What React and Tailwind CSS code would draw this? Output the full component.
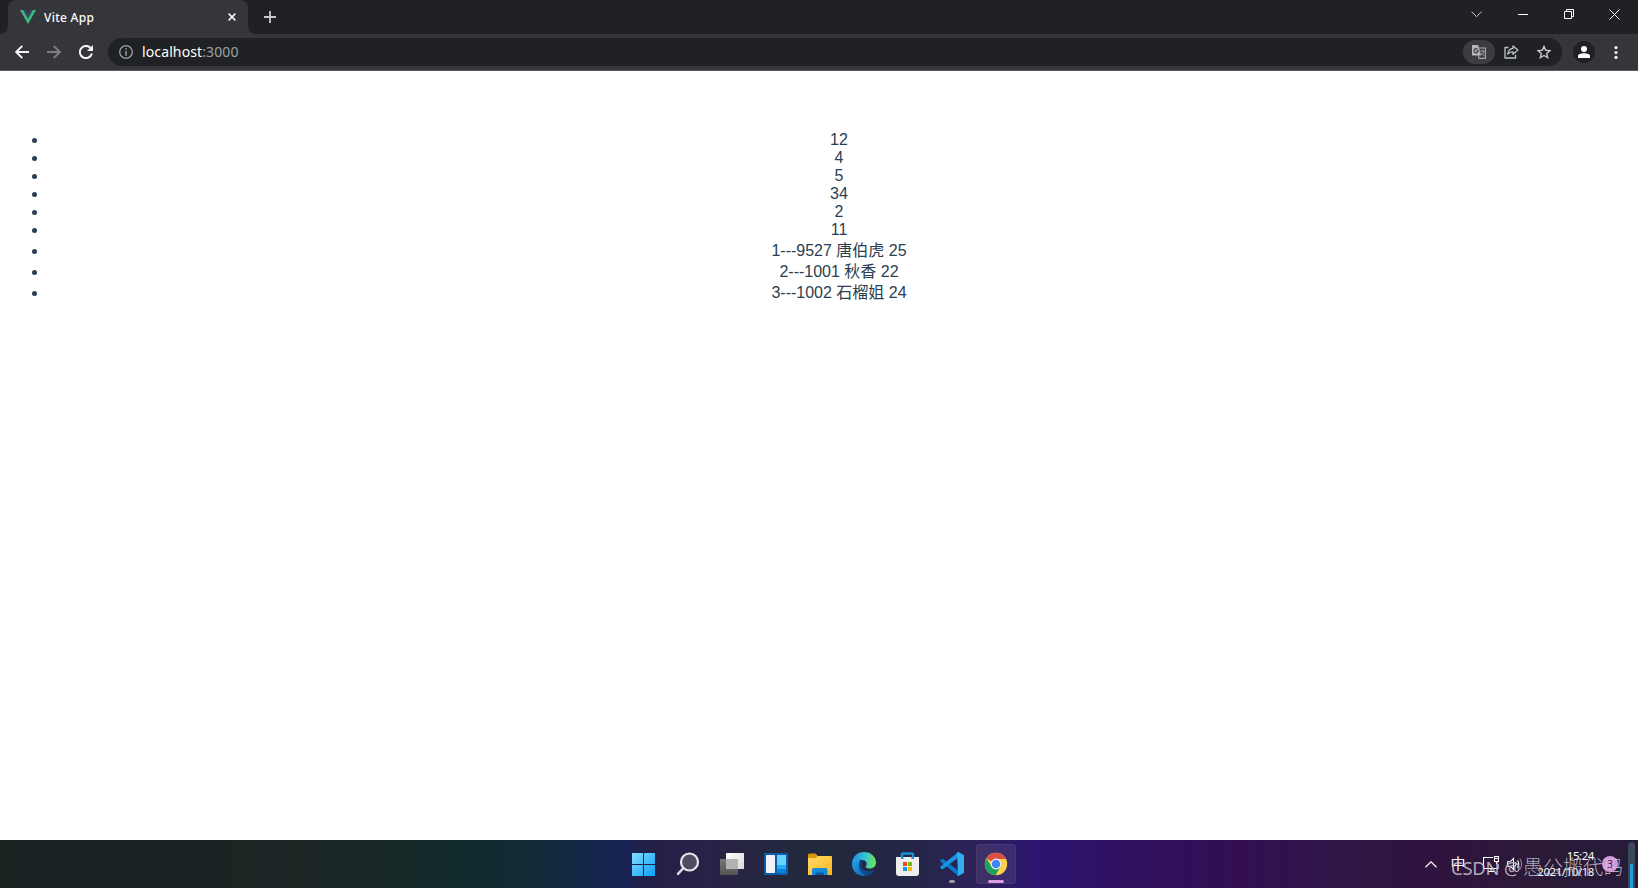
import React from "react";

const numbers = [12, 4, 5, 34, 2, 11];

const people = [
  { id: 9527, name: "唐伯虎", age: 25 },
  { id: 1001, name: "秋香", age: 22 },
  { id: 1002, name: "石榴姐", age: 24 },
];

// --- Browser chrome ---

const VueLogo = () => (
  <svg width="16" height="14" viewBox="0 0 16 14">
    <path d="M0 0h3.2L8 8.4 12.8 0H16L8 14z" fill="#41b883" />
    <path d="M3.2 0h2.9L8 3.3 9.9 0h2.9L8 8.4z" fill="#35495e" />
  </svg>
);

const TabBar = () => (
  <div className="h-[34px] bg-[#202124] flex">
    <div className="w-2 bg-[#35363a]">
      <div className="h-full bg-[#202124] rounded-br-lg"></div>
    </div>
    <div className="w-60 bg-[#35363a] rounded-t-lg flex items-center pl-3 pr-3">
      <VueLogo />
      <span className="ml-2 pt-0.5 flex-1 text-[12px] font-medium tracking-[0.28px] text-white whitespace-nowrap font-['Noto_Sans',sans-serif]">
        Vite App
      </span>
      <svg width="8" height="8" viewBox="0 0 9 9" stroke="#f1f3f4" strokeWidth="1.8">
        <path d="M.7.7l7.6 7.6M8.3.7L.7 8.3" />
      </svg>
    </div>
    <div className="w-2 bg-[#35363a]">
      <div className="h-full bg-[#202124] rounded-bl-lg"></div>
    </div>
    <div className="pl-2 pt-[11px]">
      <svg width="12" height="12" viewBox="0 0 12 12" stroke="#c8cacc" strokeWidth="1.8">
        <path d="M6 0v12M0 6h12" />
      </svg>
    </div>
    <div className="ml-auto flex h-7 items-center">
      <div className="w-[46px] pr-px flex justify-center">
        <svg width="11" height="7" viewBox="0 0 11 7" fill="none" stroke="#d0d1d2">
          <path d="M.5.7l5 5 5-5" />
        </svg>
      </div>
      <div className="w-[46px] flex justify-center">
        <div className="w-2.5 h-px bg-white"></div>
      </div>
      <div className="w-[46px] flex justify-center">
        <svg width="10" height="10" viewBox="0 0 10 10" fill="none" stroke="#fff">
          <path d="M.5 2.5h7v7h-7zM2.5 2.5v-2h7v7h-2" />
        </svg>
      </div>
      <div className="w-[46px] pr-px flex justify-center">
        <svg width="11" height="11" viewBox="0 0 11 11" stroke="#fff">
          <path d="M.5.5l10 10M10.5.5l-10 10" />
        </svg>
      </div>
    </div>
  </div>
);

const AddressBar = () => (
  <div className="h-[37px] bg-[#35363a] border-b border-[#5c5763] flex items-center pl-[15px]">
    <svg width="14" height="14" viewBox="0 0 14 14" fill="none" stroke="#f1f3f4" strokeWidth="1.9">
      <path d="M14 7H1.4M7.3.8L1.2 7l6.1 6.2" />
    </svg>
    <svg className="ml-[18px]" width="14" height="14" viewBox="0 0 14 14" fill="none" stroke="#7d7e81" strokeWidth="1.9">
      <path d="M0 7h12.6M6.7.8L12.8 7l-6.1 6.2" />
    </svg>
    <svg className="ml-[18px]" width="14" height="14" viewBox="0 0 14 14">
      <path d="M11.6 3A6.1 6.1 0 1 0 12.9 8.5" fill="none" stroke="#f1f3f4" strokeWidth="2" />
      <path d="M14 0v6H8z" fill="#f1f3f4" />
    </svg>

    <div className="ml-[15px] w-[1454px] h-7 rounded-full bg-[#202124] flex items-center pl-[11px] pr-[11px]">
      <svg width="14" height="14" viewBox="0 0 14 14">
        <circle cx="7" cy="7" r="6.3" fill="none" stroke="#9aa0a6" strokeWidth="1.3" />
        <path d="M6.3 3.3h1.5v1.5H6.3zM6.3 6h1.5v4.7H6.3z" fill="#9aa0a6" />
      </svg>
      <div className="ml-[9px] flex-1 text-[14px] text-white font-['Noto_Sans',sans-serif] tracking-[0.12px] leading-5">
        localhost<span className="text-[#9aa0a6]">:3000</span>
      </div>
      <div className="-mr-px w-8 h-6 rounded-full bg-[#3c3d41] flex items-center justify-center">
        <svg width="14" height="14" viewBox="0 0 14 14">
          <path d="M5 3h8.4v10.4H7z" fill="#3c3d41" stroke="#a8abae" strokeWidth="1.1" />
          <path d="M0 0h6.2L9 10.6H0z" fill="#b4b6b8" />
          <path d="M6.300 5.700H4.400M6.200 5.700a2.100 2.100 0 1 1-.7-1.500" fill="none" stroke="#3c3d41" strokeWidth="1.200" />
          <path d="M8.3 6h4.3M10.4 5v1M12 6c-.4 1.8-1.5 3-2.8 3.9M9.2 7.5l3 3.2" fill="none" stroke="#a8abae" strokeWidth=".9" />
        </svg>
      </div>
      <svg className="ml-[10px]" width="15" height="14" viewBox="0 0 15 14" fill="none" stroke="#bdc1c6" strokeWidth="1.3" strokeLinejoin="round">
        <path d="M4.500 2.500H1V13h10.600V9.800" />
        <path d="M9 .9l4.900 4.200L9 9.300V6.800c-2.300-.1-3.900.5-5.300 2.300C4.200 6 5.800 3.800 9 3.400z" />
      </svg>
      <svg className="ml-[18px]" width="14" height="14" viewBox="0 0 14 14" fill="none" stroke="#c3c5c8" strokeWidth="1.400">
        <path d="M7 1.300l1.700 4 4.300.4-3.300 2.800 1 4.200L7 10.500l-3.700 2.200 1-4.200L1 5.700l4.300-.4z" />
      </svg>
    </div>

    <div className="ml-[11px] w-[22px] h-[22px] rounded-full bg-[#202124] flex items-center justify-center">
      <svg width="12" height="12" viewBox="0 0 12 12" fill="#fff">
        <circle cx="6" cy="3" r="3" />
        <path d="M0 12v-1.800C0 8.200 3 7.300 6 7.300s6 .9 6 2.900V12z" />
      </svg>
    </div>
    <svg className="ml-[19px]" width="4" height="13" viewBox="0 0 4 13" fill="#f1f3f4">
      <circle cx="2" cy="1.600" r="1.600" />
      <circle cx="2" cy="6.500" r="1.600" />
      <circle cx="2" cy="11.400" r="1.600" />
    </svg>
  </div>
);

// --- Page content ---

const Page = () => (
  <main className="flex-1 bg-white pt-[60px]">
    <ul className="list-disc pl-12 pr-2 text-center text-base text-[#2c3e50] font-['Liberation_Sans','Noto_Sans_CJK_SC',sans-serif]">
      {numbers.map((n) => (
        <li key={n} className="h-[18px] leading-[18px]">
          {n}
        </li>
      ))}
      {people.map((p, index) => (
        <li key={p.id} className="h-[21px] leading-[23px]">
          {index + 1}---{p.id} {p.name} {p.age}
        </li>
      ))}
    </ul>
  </main>
);

// --- Taskbar icons ---

const StartIcon = () => (
  <svg width="24" height="24" viewBox="0 0 24 24">
    <defs>
      <linearGradient id="start" x1="0" y1="0" x2="24" y2="24" gradientUnits="userSpaceOnUse">
        <stop offset="0" stopColor="#84e0ff" />
        <stop offset="1" stopColor="#0a9cf8" />
      </linearGradient>
    </defs>
    <path d="M0 1h11v11H0zM12 1h11v11H12zM0 13h11v11H0zM12 13h11v11H12z" fill="url(#start)" />
  </svg>
);

const SearchIcon = () => (
  <svg width="24" height="24" viewBox="0 0 24 24">
    <path d="M7.500 16L2 21.800" stroke="#dcdce0" strokeWidth="2.500" strokeLinecap="round" />
    <circle cx="13.500" cy="10" r="8.500" fill="#514b63" stroke="#e8e8ec" strokeWidth="2.200" />
  </svg>
);

const TaskViewIcon = () => (
  <svg width="24" height="24" viewBox="0 0 24 24">
    <defs>
      <linearGradient id="viewFront" x1="0" y1="0" x2="1" y2="1">
        <stop offset="0" stopColor="#ffffff" />
        <stop offset="1" stopColor="#d9d9db" />
      </linearGradient>
      <linearGradient id="viewBack" x1="0" y1="0" x2="0" y2="1">
        <stop offset="0" stopColor="#777" />
        <stop offset="1" stopColor="#555" />
      </linearGradient>
    </defs>
    <rect y="7" width="18" height="16" rx=".6" fill="url(#viewBack)" />
    <rect x="6" y="1" width="18" height="16" rx=".6" fill="url(#viewFront)" />
    <path d="M6 7h12v10H6z" fill="#b2b2b4" />
  </svg>
);

const WidgetsIcon = () => (
  <svg width="24" height="24" viewBox="0 0 24 24">
    <rect y="1" width="24" height="22" rx="1" fill="#0c5cab" />
    <rect x="2" y="3" width="9" height="18" rx=".8" fill="#f0f2f5" />
    <path d="M13 3h9v10h-9z" fill="#67d5ff" />
    <path d="M13 13h9v4h-9z" fill="#24adf5" />
    <path d="M13 17h9v4h-9z" fill="#0787e5" />
  </svg>
);

const ExplorerIcon = () => (
  <svg width="24" height="24" viewBox="0 0 24 24">
    <defs>
      <linearGradient id="folder" x1="0" y1="0" x2="1" y2="1">
        <stop offset="0" stopColor="#ffda68" />
        <stop offset="1" stopColor="#fcb81f" />
      </linearGradient>
    </defs>
    <path d="M0 3q0-1.500 1.500-1.500h6L10 4v5H0z" fill="#d89a0b" />
    <path d="M0 6h7.500L10 4h13q1 0 1 1v18H0z" fill="url(#folder)" />
    <path d="M4 23v-5q0-2 2-2h11.500q2 0 2 2v5z" fill="#148ad8" />
    <path d="M7.500 20.500h8.500V23H7.500z" fill="#075ba6" />
  </svg>
);

const EdgeIcon = () => (
  <svg width="24" height="24" viewBox="0 0 24 24">
    <defs>
      <linearGradient id="edgeTop" x1="2" y1="8" x2="23" y2="9" gradientUnits="userSpaceOnUse">
        <stop offset="0" stopColor="#2196dd" />
        <stop offset=".5" stopColor="#35c1d7" />
        <stop offset="1" stopColor="#69e656" />
      </linearGradient>
      <linearGradient id="edgeSide" x1="0" y1="8" x2="12" y2="24" gradientUnits="userSpaceOnUse">
        <stop offset="0" stopColor="#2aa5e8" />
        <stop offset="1" stopColor="#0b65b8" />
      </linearGradient>
    </defs>
    <path d="M0 12C0 4.500 5.500 0 12 0c7 0 12 5 12 10.500 0 4-3 6-6.500 6-3 0-4.500-1-3.500-2.500 2-3-.5-6-4-6C5 7 1 9 0 12z" fill="url(#edgeTop)" />
    <path d="M0 12C1 8 5 6.200 9.500 7 6 9 6 20 14.500 23.700 7 25.500 0 20 0 12z" fill="url(#edgeSide)" />
    <path d="M10 8.500C5 11 6 21 14.500 23.700c3-.5 5.700-2.200 7.500-4.700.4-.7 0-1-.7-.7-5.300 2.300-12.500 0-12-5.800.1-1.600.6-2.700 1.700-3.700z" fill="#124a89" />
  </svg>
);

const StoreIcon = () => (
  <svg width="24" height="24" viewBox="0 0 24 24">
    <path d="M6 7V2.500Q6 1.500 7 1.500h9q1 0 1 1V7" fill="none" stroke="#1594d1" strokeWidth="2.500" />
    <path d="M0 5h23v16q0 3-3 3H3q-3 0-3-3z" fill="#eeeeef" />
    <path d="M5 5h2.500v2H5zM15.500 5H18v2h-2.500z" fill="#1594d1" />
    <path d="M7 10h4v4H7z" fill="#ea4a1f" />
    <path d="M12 10h4v4h-4z" fill="#78b904" />
    <path d="M7 15h4v4H7z" fill="#05a0ed" />
    <path d="M12 15h4v4h-4z" fill="#fdb500" />
  </svg>
);

const VsCodeIcon = () => (
  <svg width="24" height="24" viewBox="0 0 24 24">
    <path d="M.4 8.200l1.400-1.300q.7-.5 1.400 0L18 18.200v5.500L.4 9.500q-.7-.7 0-1.300z" fill="#0878c6" />
    <path d="M.4 15.800l1.400 1.300q.7.5 1.400 0L18 5.800V.3L.4 14.500q-.7.700 0 1.300z" fill="#1593dc" />
    <path d="M17 .2q.5-.4 1.200-.1L23 2.400q1 .5 1 1.500v16.200q0 1-1 1.500l-4.800 2.300q-.7.3-1.200-.1l1-.8z" fill="#30adf3" />
  </svg>
);

const ChromeIcon = () => (
  <svg width="24" height="24" viewBox="0 0 24 24">
    <circle cx="12" cy="12" r="11.200" fill="#fcd04c" />
    <path d="M12 12L2.300 6.400A11.200 11.200 0 0 1 21.700 6.400L21.900 7H12z" fill="#dc4f42" />
    <path d="M2.300 6.400A11.200 11.200 0 0 0 11.500 23.200L16.500 14.500 12 12l-4.300 2.500z" fill="#1ca05b" />
    <circle cx="12" cy="12" r="5.400" fill="#f4f6f8" />
    <circle cx="12" cy="12" r="4.300" fill="#4387f4" />
  </svg>
);

const apps = [
  { name: "start", Icon: StartIcon },
  { name: "search", Icon: SearchIcon },
  { name: "taskview", Icon: TaskViewIcon },
  { name: "widgets", Icon: WidgetsIcon },
  { name: "explorer", Icon: ExplorerIcon },
  { name: "edge", Icon: EdgeIcon },
  { name: "store", Icon: StoreIcon },
  { name: "vscode", Icon: VsCodeIcon, running: true },
  { name: "chrome", Icon: ChromeIcon, active: true },
];

const SystemTray = () => (
  <div className="flex items-center h-12 text-white">
    <svg width="12" height="7" viewBox="0 0 12 7" fill="none" stroke="#fff" strokeWidth="1.200">
      <path d="M.5 6.200L6 .8l5.500 5.400" />
    </svg>
    <span className="ml-[13px] pb-0.5 w-4 text-center text-[15px] leading-4 font-['Noto_Sans_CJK_SC',sans-serif]">中</span>
    <svg className="ml-[17px]" width="16" height="16" viewBox="0 0 16 16" fill="none" stroke="#fff" strokeWidth="1.100">
      <path d="M10 1.500H.5v11H15V8M5 15.500h6M8 12.500v3M11.500.5h4v5h-4zM13.500 5.500V8M11.500 2.500h4" />
    </svg>
    <svg className="ml-2" width="16" height="14" viewBox="0 0 16 14" fill="none" stroke="#fff" strokeWidth="1.100">
      <path d="M.6 4.800h2.600L6.500 1.500v11L3.200 9.200H.6zM8.500 5q1.300 2 0 4M10.500 3.200q2.500 3.800 0 7.600" />
      <path d="M12.800 1.500q3.700 5.500 0 11" stroke="#8d8396" />
    </svg>
    <div className="ml-[11px] w-[60px] text-right text-[11.5px] leading-4 tracking-[-0.45px] font-['Noto_Sans',sans-serif]">
      <div>15:24</div>
      <div>2021/10/18</div>
    </div>
    <div className="ml-2 w-4 h-4 rounded-full bg-[#d795df] text-[#2c1c38] text-[10px] leading-4 text-center font-['Noto_Sans',sans-serif]">
      3
    </div>
  </div>
);

const Taskbar = () => (
  <footer className="relative h-12 flex bg-[linear-gradient(90deg,#1b2323_0px,#1a2524_310px,#172726_390px,#102a2a_450px,#112a38_540px,#13284a_590px,#182356_624px,#221f47_645px,#2a2146_710px,#22293d_790px,#22283e_840px,#252649_920px,#2d2158_975px,#2b1470_1040px,#300f5c_1150px,#330f52_1240px,#2e1642_1370px,#30123f_1430px,#2b1a38_1530px,#251b38_1638px)]">
    <div className="w-[622px]"></div>
    <div className="flex">
      {apps.map(({ name, Icon, running, active }) => (
        <div key={name} className="w-11 h-12 p-0.5 flex items-center">
          <div
            className={`relative w-10 h-10 rounded flex items-center justify-center ${
              active ? "bg-white/8 border border-white/5" : ""
            }`}
          >
            <Icon />
            {running && (
              <span className="absolute bottom-[1px] left-[17px] w-1.5 h-[3px] rounded-full bg-[#9f9aab]"></span>
            )}
            {active && (
              <span className="absolute bottom-0 left-[11px] w-4 h-[3px] rounded-full bg-[#dc9be3]"></span>
            )}
          </div>
        </div>
      ))}
    </div>
    <div className="ml-[407px]">
      <SystemTray />
    </div>

    {/* Watermark over the tray */}
    <div className="absolute left-[1451px] top-4 flex items-center leading-6 whitespace-nowrap text-[#c9c6cd]/85 font-['Noto_Sans','Noto_Sans_CJK_SC',sans-serif]">
      <span className="w-[72px] text-[18.5px] tracking-[-0.25px]">CSDN @</span>
      <span className="text-[20px] font-light">愚公搬代码</span>
    </div>
    <div className="absolute right-[3px] top-0.5 bottom-0 w-[7px] rounded-t-full bg-[#3b4857]">
      <div className="mt-[22px] mx-auto w-[3px] h-6 bg-[#249bdd]"></div>
    </div>
  </footer>
);

export default function App() {
  return (
    <div className="w-[1638px] h-[888px] flex flex-col overflow-hidden">
      <TabBar />
      <AddressBar />
      <Page />
      <Taskbar />
    </div>
  );
}
